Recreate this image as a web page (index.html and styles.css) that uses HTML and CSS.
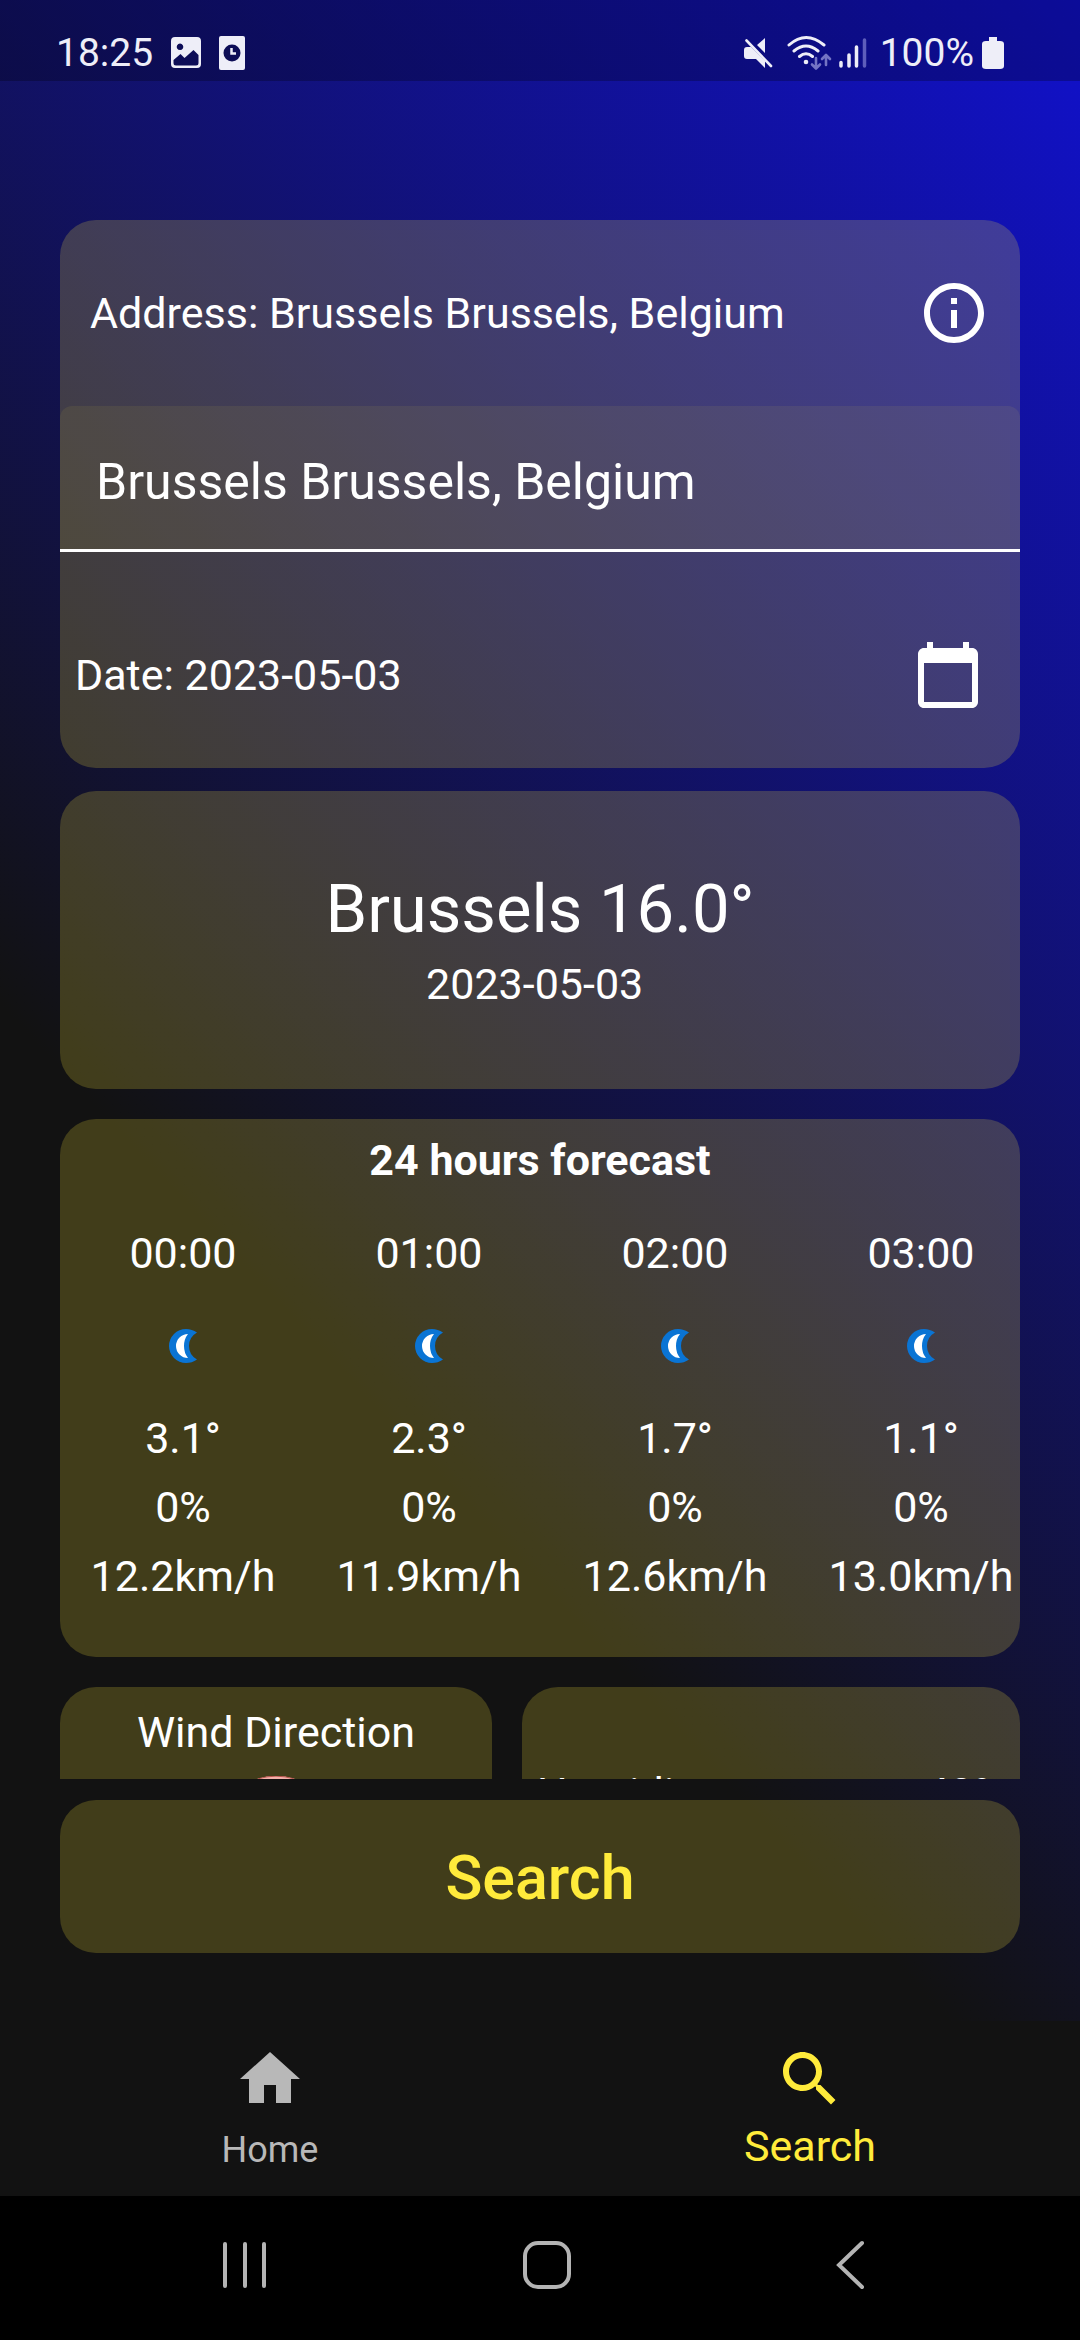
FILE: index.html
```html
<!DOCTYPE html>
<html lang="en">
<head>
<meta charset="utf-8">
<meta name="viewport" content="width=device-width, initial-scale=1">
<title>Weather search</title>
<link rel="stylesheet" href="styles.css">
</head>
<body>
<div class="screen">
  <div class="app">
    <header class="status">
      <div class="status-group">
        <span class="status-text">18:25</span>
        <svg class="ic-picture" width="32" height="34" viewBox="0 0 32 34" aria-hidden="true"><path fill="currentColor" fill-rule="evenodd" d="M5 1h22a4 4 0 0 1 4 4v23a4 4 0 0 1-4 4H5a4 4 0 0 1-4-4V5a4 4 0 0 1 4-4zM10 7.500a3.300 3.300 0 1 0 .010 0zM3.500 24v3a2.500 2.500 0 0 0 2.500 2.500h20a2.500 2.500 0 0 0 2.500-2.500v-8L23.500 14l-9 8-4-4z"/></svg>
        <svg class="ic-alarm" width="28" height="34" viewBox="0 0 28 34" aria-hidden="true"><rect x="1" y="0" width="26" height="34" rx="2" fill="currentColor"/><circle cx="14" cy="17" r="8.500" fill="#0d0d56"/><path d="M13.500 12v5.500H18" fill="none" stroke="currentColor" stroke-width="2.500"/></svg>
      </div>
      <div class="status-group status-right">
        <svg width="30" height="32" viewBox="0 0 30 32" aria-hidden="true"><path fill="currentColor" d="M14 8l8-7v15zM1 13q0-3 3-3h4l14 14v7l-9-9H4q-3 0-3-3z"/><path d="M3.500 3.500L28 29" stroke="currentColor" stroke-width="2.600" stroke-linecap="round"/></svg>
        <svg class="ic-wifi" width="46" height="36" viewBox="0 0 46 36" aria-hidden="true"><g fill="none" stroke="currentColor" stroke-width="3" stroke-linecap="round"><path d="M2 10Q19-5 37 10M7 16q12-10 24 0M12.500 21.500q6.500-5.500 13 0"/></g><circle cx="19" cy="27" r="2.300" fill="currentColor"/><g fill="none" stroke="#7474c4" stroke-width="2.600" stroke-linecap="round" stroke-linejoin="round"><path d="M29 23v10M25 29.500l4 4 4-4M39 30V21M35 24l4-4 4 4"/></g></svg>
        <svg class="ic-signal" width="28" height="32" viewBox="0 0 28 32" aria-hidden="true"><g stroke="currentColor" stroke-width="3.500" stroke-linecap="round"><path d="M2 25.500V29M10 18v11M17.500 10v19"/><path d="M25.500 3v26" stroke="#5e5ebb"/></g></svg>
        <span class="status-text">100%</span>
        <svg class="ic-battery" width="22" height="32" viewBox="0 0 22 32" aria-hidden="true"><path fill="currentColor" d="M7 0h8v4h3q4 0 4 3v22q0 3-4 3H4q-4 0-4-3V7q0-3 4-3h3z"/></svg>
      </div>
    </header>

    <main class="content">
      <div class="scroll">
        <form class="card query">
          <div class="row row-address">
            <label for="place">Address: Brussels Brussels, Belgium</label>
            <button type="button" class="icon-button" aria-label="Information"><svg width="72" height="72" viewBox="0 0 24 24"><path fill="currentColor" d="M11 7h2v2h-2zm0 4h2v6h-2zm1-9C6.480 2 2 6.480 2 12s4.480 10 10 10 10-4.480 10-10S17.520 2 12 2zm0 18c-4.410 0-8-3.590-8-8s3.590-8 8-8 8 3.590 8 8-3.590 8-8 8z"/></svg></button>
          </div>
          <input id="place" class="place" type="text" value="Brussels Brussels, Belgium">
          <div class="row row-date">
            <span>Date: 2023-05-03</span>
            <button type="button" class="icon-button" aria-label="Pick a date"><svg width="72" height="72" viewBox="0 0 24 24"><path fill="currentColor" d="M20 3h-1V1h-2v2H7V1H5v2H4c-1.100 0-2 .9-2 2v16c0 1.100.9 2 2 2h16c1.100 0 2-.9 2-2V5c0-1.100-.9-2-2-2zm0 18H4V8h16v13z"/></svg></button>
          </div>
        </form>

        <section class="card current">
          <h1>Brussels 16.0°</h1>
          <p>2023-05-03 </p>
        </section>

        <section class="card forecast">
          <h2>24 hours forecast</h2>
          <ul class="hours">
            <li class="hour"><span>00:00</span><svg class="moon" width="30" height="36" viewBox="0 0 30 36"><path fill="#0a74d4" d="M18 1A17 17 0 1 0 18 35Q24 35 29 31.500Q21 27 21 18T29 4.500Q24 1 18 1z"/><path fill="#fff" d="M20 6A12 12 0 1 0 20 30Q16 25 16 18T20 6z"/></svg><span>3.1°</span><span>0%</span><span>12.2km/h</span></li>
            <li class="hour"><span>01:00</span><svg class="moon" width="30" height="36" viewBox="0 0 30 36"><path fill="#0a74d4" d="M18 1A17 17 0 1 0 18 35Q24 35 29 31.500Q21 27 21 18T29 4.500Q24 1 18 1z"/><path fill="#fff" d="M20 6A12 12 0 1 0 20 30Q16 25 16 18T20 6z"/></svg><span>2.3°</span><span>0%</span><span>11.9km/h</span></li>
            <li class="hour"><span>02:00</span><svg class="moon" width="30" height="36" viewBox="0 0 30 36"><path fill="#0a74d4" d="M18 1A17 17 0 1 0 18 35Q24 35 29 31.500Q21 27 21 18T29 4.500Q24 1 18 1z"/><path fill="#fff" d="M20 6A12 12 0 1 0 20 30Q16 25 16 18T20 6z"/></svg><span>1.7°</span><span>0%</span><span>12.6km/h</span></li>
            <li class="hour"><span>03:00</span><svg class="moon" width="30" height="36" viewBox="0 0 30 36"><path fill="#0a74d4" d="M18 1A17 17 0 1 0 18 35Q24 35 29 31.500Q21 27 21 18T29 4.500Q24 1 18 1z"/><path fill="#fff" d="M20 6A12 12 0 1 0 20 30Q16 25 16 18T20 6z"/></svg><span>1.1°</span><span>0%</span><span>13.0km/h</span></li>
          </ul>
        </section>

        <div class="pair">
          <section class="card wind">
            <h3>Wind Direction</h3>
            <svg width="120" height="120" viewBox="0 0 120 120" aria-hidden="true"><circle cx="60" cy="60" r="60" fill="#f4f4f4"/><path d="M41 3Q60-3 79 3L60 60z" fill="#f3b0aa"/><path d="M42 2.800Q60-2.500 78 2.800" fill="none" stroke="#b5524a" stroke-width="1"/></svg>
          </section>
          <section class="card details">
            <span>Humidity</span><span>48%</span>
          </section>
        </div>
      </div>
      <button type="button" class="card search-button">Search</button>
    </main>
  </div>

  <nav class="tabs">
    <a class="tab" href="#home"><svg width="72" height="72" viewBox="0 0 24 24" aria-hidden="true"><path fill="currentColor" d="M10 20v-6h4v6h5v-8h3L12 3 2 12h3v8z"/></svg><span>Home</span></a>
    <a class="tab active" href="#search"><svg width="72" height="72" viewBox="0 0 24 24" aria-hidden="true"><path fill="currentColor" d="M15.500 14h-.79l-.28-.27C15.410 12.590 16 11.110 16 9.500 16 5.910 13.090 3 9.500 3S3 5.910 3 9.500 5.910 16 9.500 16c1.610 0 3.090-.59 4.230-1.570l.27.28v.79l5 4.990L20.490 19l-4.990-5zm-6 0C7.010 14 5 11.990 5 9.500S7.010 5 9.500 5 14 7.010 14 9.500 11.990 14 9.500 14z"/></svg><span>Search</span></a>
  </nav>

  <footer class="system">
    <button type="button" aria-label="Recent apps"><svg width="50" height="50" viewBox="0 0 50 50"><path d="M5 4v42M25 4v42M44 4v42" stroke="currentColor" stroke-width="4" stroke-linecap="round"/></svg></button>
    <button type="button" aria-label="Home screen"><svg width="50" height="50" viewBox="0 0 50 50"><rect x="3" y="3" width="44" height="44" rx="13" fill="none" stroke="currentColor" stroke-width="4"/></svg></button>
    <button type="button" aria-label="Back"><svg width="50" height="50" viewBox="0 0 50 50"><path d="M38 3L15 25l23 22" fill="none" stroke="currentColor" stroke-width="4" stroke-linecap="round"/></svg></button>
  </footer>
</div>
</body>
</html>
```
FILE: styles.css
```css
* { box-sizing: border-box; }

body {
  margin: 0;
  background: #121212;
  color: #fff;
  font-family: Roboto, "Liberation Sans", sans-serif;
  font-size: 43px;
  line-height: 50px;
}

h1, h2, h3, p, ul { margin: 0; padding: 0; }

button {
  border: 0;
  padding: 0;
  background: none;
  color: inherit;
  font: inherit;
}

svg { display: block; flex: none; }

.screen {
  display: flex;
  flex-direction: column;
  height: 100vh;
}

.app {
  display: flex;
  flex-direction: column;
  flex: 1;
  min-height: 0;
  background: linear-gradient(227deg, #1111cc, #121212 68%);
}

.status {
  display: flex;
  justify-content: space-between;
  align-items: center;
  padding: 29px 76px 4px 56px;
  background: rgba(0, 0, 0, 0.25);
  color: #eeeef8;
}

.status-group { display: flex; align-items: center; }
.status-text { font-size: 39px; line-height: 48px; }
.ic-picture { margin-left: 17px; }
.ic-alarm { margin-left: 16px; }
.ic-wifi { margin-left: 14px; }
.ic-signal { margin-left: 6px; margin-right: 13px; }
.ic-battery { margin-left: 8px; }

.content {
  display: flex;
  flex-direction: column;
  flex: 1;
  min-height: 0;
  padding: 139px 60px 68px;
  gap: 21px;
}

.scroll {
  display: flex;
  flex-direction: column;
  flex: 1;
  min-height: 0;
  overflow: hidden;
}

.scroll > * { flex: none; }

.card {
  border-radius: 36px;
  background: rgba(255, 235, 59, 0.2);
}

.row {
  display: flex;
  align-items: center;
  justify-content: space-between;
}

.row-address { height: 186px; padding: 0 30px; }
.row-date { height: 216px; padding: 30px 36px 0 15px; }

.place {
  display: block;
  width: 100%;
  height: 146px;
  padding: 8px 36px 0;
  border: 0;
  border-bottom: 3px solid #fff;
  border-radius: 12px 12px 0 0;
  background: rgba(255, 235, 59, 0.07);
  color: #fff;
  font: 50px/60px Roboto, "Liberation Sans", sans-serif;
}

.current {
  margin-top: 23px;
  padding: 76px 0 72px;
  text-align: center;
}

.current h1 { font-size: 67px; line-height: 84px; font-weight: 400; }
.current p { line-height: 66px; white-space: pre; }

.forecast { margin-top: 30px; height: 538px; overflow: hidden; }
.forecast h2 { padding-top: 10px; font-size: 43px; line-height: 62px; text-align: center; }

.hours { display: flex; list-style: none; padding-top: 28px; }

.hour {
  display: flex;
  flex: 0 0 246px;
  flex-direction: column;
  align-items: center;
  line-height: 69px;
}

.moon { margin: 40px 0; }

.pair {
  display: grid;
  grid-template-columns: 432fr 498fr;
  gap: 30px;
  margin-top: 30px;
}

.wind {
  display: flex;
  flex-direction: column;
  align-items: center;
  padding-top: 20px;
}

.wind h3 { font-size: 43px; line-height: 50px; font-weight: 400; }
.wind svg { margin-top: 19px; }

.details {
  display: flex;
  justify-content: space-between;
  padding: 81px 15px 0;
}

.search-button {
  height: 153px;
  padding-top: 2px;
  color: #ffeb3b;
  font-size: 61px;
  font-weight: 500;
}

.tabs { display: flex; height: 175px; }

.tab {
  display: flex;
  flex: 1;
  flex-direction: column;
  align-items: center;
  padding-top: 22px;
  color: #b8b8b8;
  font-size: 36px;
  line-height: 70px;
  text-decoration: none;
}

.tab.active { color: #ffeb3b; font-size: 43px; line-height: 62px; }

.system {
  display: flex;
  align-items: center;
  justify-content: space-between;
  height: 144px;
  padding: 0 206px 6px 220px;
  background: #000;
  color: #b4b4b4;
}
```
